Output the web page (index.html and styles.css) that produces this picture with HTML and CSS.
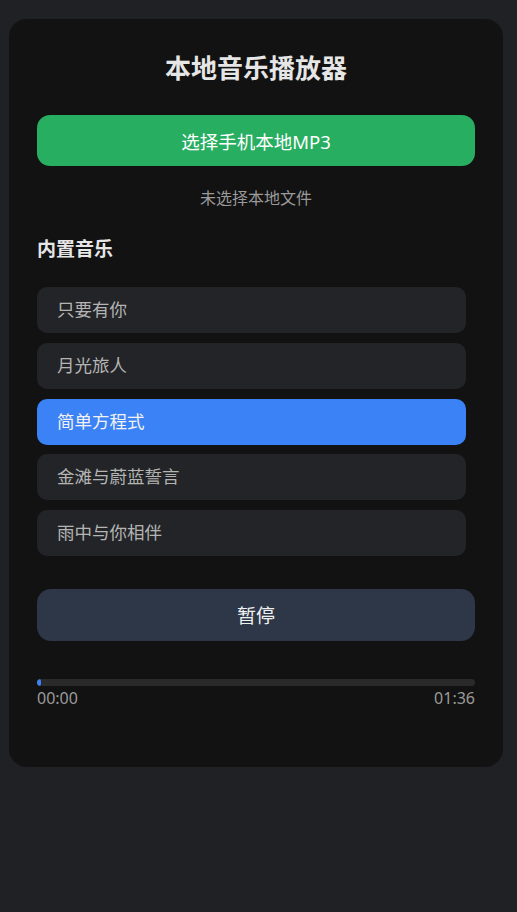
FILE: index.html
```html
<!DOCTYPE html>
<html lang="zh">
<head>
<meta charset="utf-8">
<title>本地音乐播放器</title>
<link rel="stylesheet" href="styles.css">
</head>
<body>
<div class="card">
  <h1 class="title">本地音乐播放器</h1>
  <button class="btn-pick">选择手机本地MP3</button>
  <div class="file-status">未选择本地文件</div>
  <h2 class="section">内置音乐</h2>
  <ul class="playlist">
    <li class="track">只要有你</li>
    <li class="track">月光旅人</li>
    <li class="track active">简单方程式</li>
    <li class="track">金滩与蔚蓝誓言</li>
    <li class="track">雨中与你相伴</li>
  </ul>
  <button class="btn-play">暂停</button>
  <div class="progress"><div class="progress-fill"></div></div>
  <div class="times"><span>00:00</span><span>01:36</span></div>
</div>
</body>
</html>
```
FILE: styles.css
```css
html, body {
  margin: 0;
  padding: 0;
  background: #202124;
}
body {
  font-family: "Noto Sans", "Noto Sans CJK SC", sans-serif;
  padding: 19px 14px 0 9px;
  height: 912px;
  box-sizing: border-box;
}
.card {
  background: #121212;
  border-radius: 18px;
  padding: 30px 28px 58px 28px;
  display: flex;
  flex-direction: column;
}
.title {
  margin: 0;
  text-align: center;
  font-size: 26px;
  font-weight: 700;
  color: #e6e6e6;
  line-height: 38px;
}
.btn-pick {
  margin-top: 28px;
  height: 51px;
  border: none;
  border-radius: 13px;
  background: #27ae60;
  color: #ffffff;
  font-family: inherit;
  font-size: 18.5px;
  padding: 0;
}
.file-status {
  margin-top: 20px;
  text-align: center;
  color: #9a9a9a;
  font-size: 16px;
  line-height: 24px;
}
.section {
  margin: 26px 0 0 0;
  font-size: 19px;
  font-weight: 700;
  color: #e6e6e6;
  line-height: 26px;
}
.playlist {
  list-style: none;
  margin: 25px 9px 0 0;
  padding: 0;
  display: flex;
  flex-direction: column;
  gap: 9.75px;
}
.track {
  height: 46px;
  box-sizing: border-box;
  padding: 0 20px 3px 20px;
  display: flex;
  align-items: center;
  background: #232427;
  border-radius: 10px;
  color: #b4b4b4;
  font-size: 17.5px;
}
.track.active {
  background: #3b82f6;
  color: #f2f2f2;
}
.btn-play {
  margin-top: 33px;
  height: 52px;
  border: none;
  border-radius: 14px;
  background: #2d3748;
  color: #f0f0f0;
  font-family: inherit;
  font-size: 19px;
  padding: 0;
}
.progress {
  margin-top: 38px;
  height: 7px;
  border-radius: 4px;
  background: #2a2a2a;
  overflow: hidden;
}
.progress-fill {
  width: 4px;
  height: 100%;
  background: #3b82f6;
  border-radius: 4px;
}
.times {
  display: flex;
  justify-content: space-between;
  color: #9a9a9a;
  font-size: 16px;
  line-height: 22px;
  margin-top: 1px;
}
```
